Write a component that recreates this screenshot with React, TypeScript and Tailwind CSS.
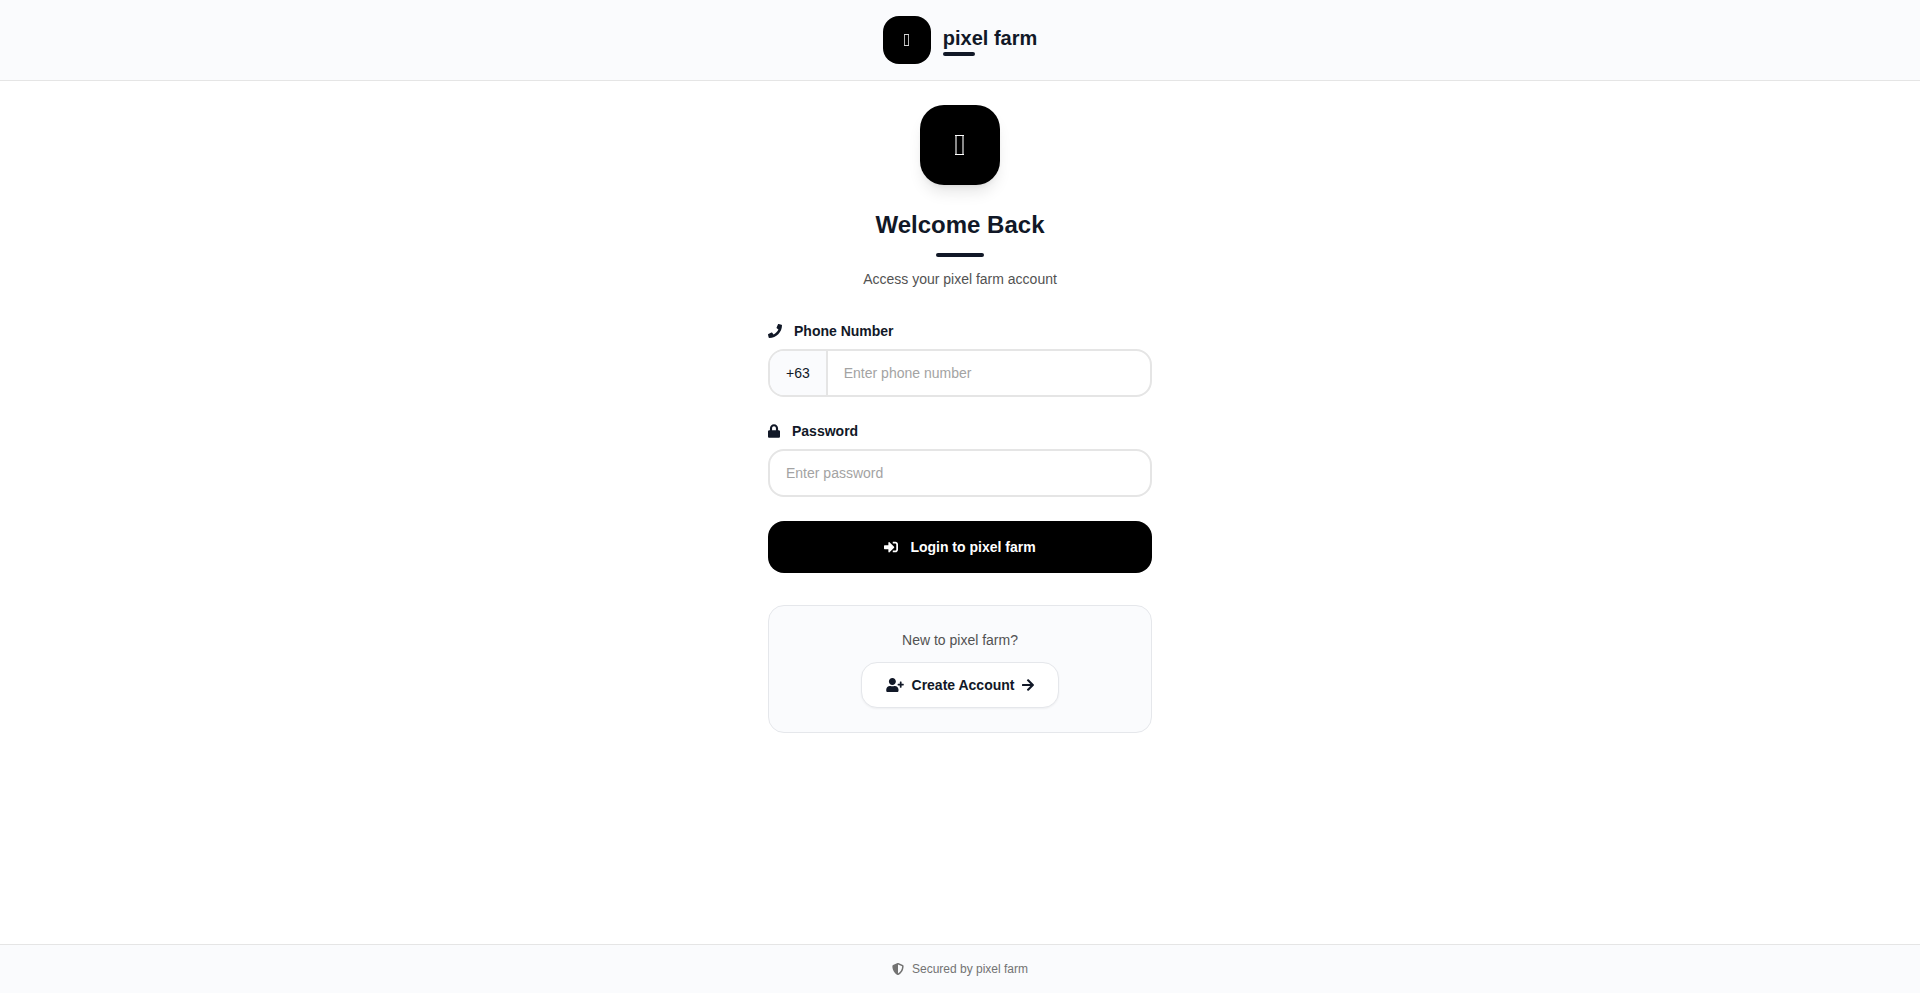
import { useState } from 'react';
import type { FormEvent } from 'react';
import { FaArrowRight, FaLock, FaPhone, FaShieldAlt, FaSignInAlt, FaUserPlus } from 'react-icons/fa';

function SmallGlyph() {
    return (
        <svg width="6" height="12" viewBox="0 0 6 12" shapeRendering="crispEdges">
            <path d="M0 0h1v12H0zM4 0h1v12H4z" fill="#b4b4b4" />
            <path d="M0 0h5v1H0zM0 11h5v1H0z" fill="#d4d4d4" />
        </svg>
    );
}

function LargeGlyph() {
    return (
        <svg width="10" height="20" viewBox="0 0 10 20" shapeRendering="crispEdges">
            <path d="M0 0h2v20H0zM7 0h2v20H7z" fill="#8a8a8a" />
            <path d="M0 0h9v1H0zM0 19h9v1H0z" fill="#ffffff" />
        </svg>
    );
}

function App() {
    const [phone, setPhone] = useState('');
    const [password, setPassword] = useState('');

    const handleSubmit = (e: FormEvent) => {
        e.preventDefault();
    };

    return (
        <div className="flex min-h-screen flex-col bg-white font-['Liberation_Sans',Arial,sans-serif] text-sm text-[#111827]">
            {/* Header */}
            <header className="flex items-center justify-center gap-3 border-b border-[#e5e5e5] bg-[#fafbfd] py-4">
                <div className="flex size-12 items-center justify-center rounded-2xl bg-black">
                    <SmallGlyph />
                </div>
                <div>
                    <div className="text-xl font-bold">pixel farm</div>
                    <div className="h-1 w-8 rounded-full bg-[#111827]" />
                </div>
            </header>

            <main className="mx-auto w-full max-w-sm flex-1 py-6">
                {/* Welcome */}
                <div className="mb-8 flex flex-col items-center">
                    <div className="mb-6 flex size-20 items-center justify-center rounded-3xl bg-black shadow-lg">
                        <LargeGlyph />
                    </div>
                    <h1 className="text-2xl font-bold">Welcome Back</h1>
                    <div className="my-3 h-1 w-12 rounded-full bg-[#111827]" />
                    <p className="text-[#525252]">Access your pixel farm account</p>
                </div>

                {/* Login form */}
                <form onSubmit={handleSubmit}>
                    <label htmlFor="phone" className="mb-2 flex items-center gap-3 font-bold">
                        <FaPhone className="size-3.5" />
                        Phone Number
                    </label>
                    <div className="mb-6 flex h-12 overflow-hidden rounded-2xl border-2 border-[#e5e5e5] bg-white">
                        <span className="flex items-center border-r-2 border-[#e5e5e5] bg-[#fafbfd] px-4">+63</span>
                        <input
                            id="phone"
                            type="tel"
                            value={phone}
                            onChange={(e) => setPhone(e.target.value)}
                            placeholder="Enter phone number"
                            className="min-w-0 flex-1 px-4 outline-none placeholder:text-[#a3a3a3]"
                        />
                    </div>

                    <label htmlFor="password" className="mb-2 flex items-center gap-3 font-bold">
                        <FaLock className="h-3.5 w-3" />
                        Password
                    </label>
                    <input
                        id="password"
                        type="password"
                        value={password}
                        onChange={(e) => setPassword(e.target.value)}
                        placeholder="Enter password"
                        className="mb-6 block h-12 w-full rounded-2xl border-2 border-[#e5e5e5] bg-white px-4 outline-none placeholder:text-[#a3a3a3]"
                    />

                    <button
                        type="submit"
                        className="flex w-full items-center justify-center gap-3 rounded-2xl bg-black py-4 font-bold text-white"
                    >
                        <FaSignInAlt className="size-3.5" />
                        Login to pixel farm
                    </button>
                </form>

                {/* Register */}
                <div className="mt-8 flex flex-col items-center gap-3 rounded-2xl border border-[#e5e7eb] bg-[#fafbfd] p-6">
                    <p className="text-[#525252]">New to pixel farm?</p>
                    <a
                        href="#register"
                        className="flex items-center gap-2 rounded-2xl border border-[#e5e7eb] bg-white px-6 py-3 font-bold shadow-xs"
                    >
                        <FaUserPlus className="h-3.5 w-[18px]" />
                        Create Account
                        <FaArrowRight className="h-3.5 w-3" />
                    </a>
                </div>
            </main>

            <footer className="flex items-center justify-center gap-2 border-t border-[#e5e5e5] bg-[#fafbfd] py-4 text-xs text-[#737373]">
                <FaShieldAlt className="size-3" />
                Secured by pixel farm
            </footer>
        </div>
    );
}

export default App;
